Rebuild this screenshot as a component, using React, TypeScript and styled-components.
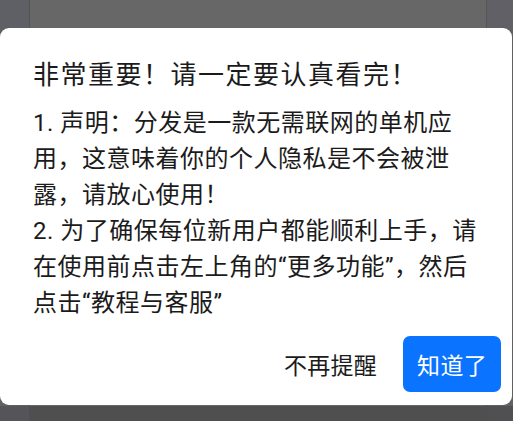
import styled, { createGlobalStyle } from "styled-components"

const GlobalStyle = createGlobalStyle`
    html, body {
        margin: 0;
        padding: 0;
        width: 513px;
        height: 421px;
        overflow: hidden;
        font-family: Roboto, "Noto Sans CJK SC", sans-serif;
    }
`

// dimmed app screen sitting under the modal
const Screen = styled.div`
    position: relative;
    width: 513px;
    height: 421px;
    display: flex;
    flex-direction: column;
`

const Panes = styled.div`
    flex: 1;
    display: grid;
    grid-template-columns: 29px 1px 1fr 1px 26px;
`

const Pane = styled.div<{ $tone: string }>`
    background: ${p => p.$tone};
`

const BottomBar = styled.div`
    height: 15px;
    display: grid;
    grid-template-columns: 29px 1fr 26px;
    & > div:nth-child(1) { background: #545459; }
    & > div:nth-child(2) { background: #4f4f50; }
    & > div:nth-child(3) { background: #505052; }
`

const Dialog = styled.div`
    position: absolute;
    top: 28px;
    left: 0;
    width: 512px;
    box-sizing: border-box;
    background: #fff;
    border-radius: 9px;
    padding: 29px 11px 13px 33px;
    color: #1b1b1b;
`

const Title = styled.h2`
    margin: 0;
    font-size: 26px;
    line-height: 36px;
    font-weight: 400;
    letter-spacing: 1.5px;
    white-space: nowrap;
`

const Body = styled.div`
    margin-top: 12px;
    font-size: 24px;
    line-height: 36px;
    letter-spacing: 0.5px;
    white-space: nowrap;
`

const Line = styled.div``

const Footer = styled.div`
    margin-top: 15px;
    display: flex;
    justify-content: flex-end;
    align-items: center;
    gap: 12px;
`

const Button = styled.button<{ $primary?: boolean }>`
    height: 56px;
    padding: 0 14px;
    border: none;
    border-radius: 7px;
    font-family: inherit;
    font-size: 23px;
    letter-spacing: 0.3px;
    cursor: pointer;
    background: ${p => (p.$primary ? "#0a73ff" : "transparent")};
    color: ${p => (p.$primary ? "#fff" : "#1b1b1b")};
`

const lines = [
    "1. 声明：分发是一款无需联网的单机应",
    "用，这意味着你的个人隐私是不会被泄",
    "露，请放心使用！",
    "2. 为了确保每位新用户都能顺利上手，请",
    "在使用前点击左上角的“更多功能”，然后",
    "点击“教程与客服”",
]

export default function App() {
    return (
        <Screen>
            <GlobalStyle />
            <Panes>
                <Pane $tone="#5f5f66" />
                <Pane $tone="#545456" />
                <Pane $tone="#676767" />
                <Pane $tone="#565656" />
                <Pane $tone="#606066" />
            </Panes>
            <BottomBar>
                <div />
                <div />
                <div />
            </BottomBar>

            <Dialog>
                <Title>非常重要！请一定要认真看完！</Title>
                <Body>
                    {lines.map((l, i) => (
                        <Line key={i}>{l}</Line>
                    ))}
                </Body>
                <Footer>
                    <Button>不再提醒</Button>
                    <Button $primary>知道了</Button>
                </Footer>
            </Dialog>
        </Screen>
    )
}
